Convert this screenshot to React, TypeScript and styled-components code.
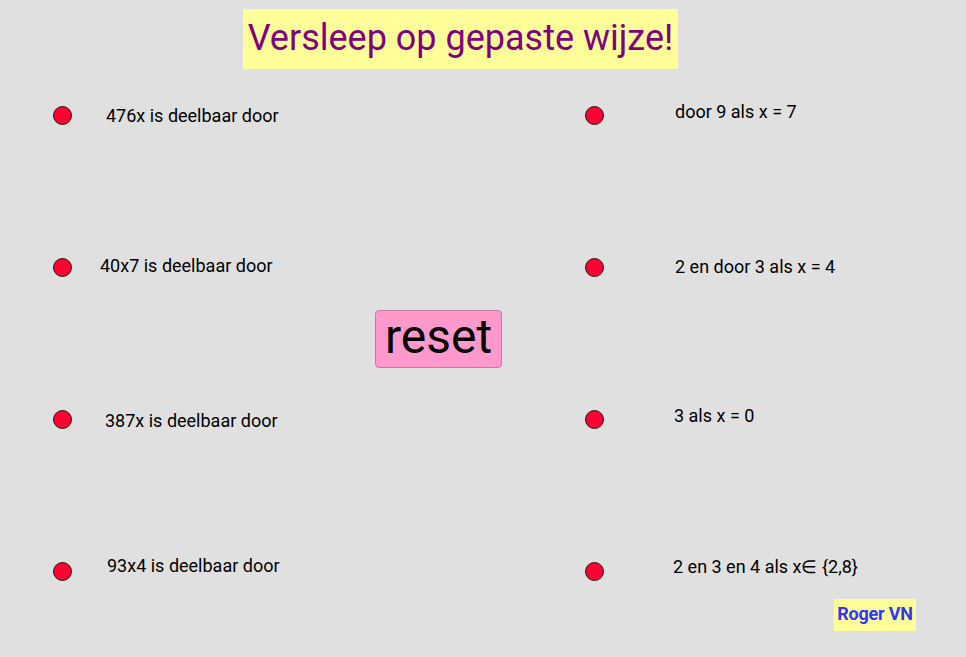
import React from 'react';
import styled, { createGlobalStyle } from 'styled-components';

const GlobalStyle = createGlobalStyle`
  * {
    margin: 0;
    padding: 0;
    box-sizing: border-box;
  }

  body {
    font-family: Roboto, 'Liberation Sans', sans-serif;
    background-color: #e0e0e0;
    color: #000;
    overflow: hidden;
  }
`;

// GeoGebra-style worksheet: draggable points and texts live on a free canvas
type Item = { x: number; y: number };

const points: Item[] = [
  { x: 62.5, y: 115.5 },
  { x: 62.5, y: 267.5 },
  { x: 62.5, y: 419.5 },
  { x: 62.5, y: 571.5 },
  { x: 594.5, y: 115.5 },
  { x: 594.5, y: 267.5 },
  { x: 594.5, y: 419.5 },
  { x: 594.5, y: 571.5 },
];

const labels: (Item & { text: string })[] = [
  { x: 106, y: 122, text: '476x is deelbaar door' },
  { x: 100, y: 272, text: '40x7 is deelbaar door' },
  { x: 105, y: 427, text: '387x is deelbaar door' },
  { x: 107, y: 572, text: '93x4 is deelbaar door' },
  { x: 675, y: 118, text: 'door 9 als x = 7' },
  { x: 675, y: 273, text: '2 en door 3 als x = 4' },
  { x: 674, y: 422, text: '3 als x = 0' },
  { x: 673, y: 573, text: '2 en 3 en 4 als x\u2208 {2,8}' },
];

const App: React.FC = () => {
  return (
    <>
      <GlobalStyle />
      <Canvas>
        <Title>Versleep op gepaste wijze!</Title>

        {labels.map((l) => (
          <Label key={l.text} $x={l.x} $y={l.y}>
            {l.text}
          </Label>
        ))}

        {points.map((p, i) => (
          <Point key={i} $x={p.x} $y={p.y} />
        ))}

        <ResetButton type="button">reset</ResetButton>

        <Signature>Roger VN</Signature>
      </Canvas>
    </>
  );
};

const Canvas = styled.div`
  position: relative;
  width: 100vw;
  height: 100vh;
  background: #e0e0e0;
  overflow: hidden;
`;

const Title = styled.div`
  position: absolute;
  left: 243px;
  top: 9px;
  width: 435px;
  height: 60px;
  display: flex;
  align-items: center;
  justify-content: center;
  background: #ffff99;
  color: #800080;
  font-size: 36px;
  line-height: 1;
  padding-bottom: 2px;
  white-space: nowrap;
`;

const Label = styled.div.attrs<{ $x: number; $y: number }>((p) => ({
  style: { left: `${p.$x}px`, top: `${p.$y - 17}px` },
}))<{ $x: number; $y: number }>`
  position: absolute;
  font-size: 18px;
  line-height: 21px;
  color: #000;
  white-space: nowrap;
`;

const Point = styled.div.attrs<{ $x: number; $y: number }>((p) => ({
  style: { left: `${p.$x - 9.5}px`, top: `${p.$y - 9.5}px` },
}))<{ $x: number; $y: number }>`
  position: absolute;
  width: 19px;
  height: 19px;
  border-radius: 50%;
  background: #ff0033;
  border: 1px solid #1a1a1a;
`;

const ResetButton = styled.button`
  position: absolute;
  left: 375px;
  top: 310px;
  width: 127px;
  height: 58px;
  display: flex;
  align-items: center;
  justify-content: center;
  background: #ff99cc;
  border: 1px solid #c77aa0;
  border-radius: 4px;
  font-family: Roboto, 'Liberation Sans', sans-serif;
  font-size: 48px;
  line-height: 1;
  color: #000;
  padding-bottom: 4px;
  cursor: pointer;
`;

const Signature = styled.div`
  position: absolute;
  left: 834px;
  top: 599px;
  width: 82px;
  height: 32px;
  display: flex;
  align-items: center;
  justify-content: center;
  background: #ffff99;
  color: #3333ff;
  font-size: 18px;
  font-weight: 700;
  letter-spacing: -0.2px;
  line-height: 1;
  padding-bottom: 2px;
`;

export default App;
